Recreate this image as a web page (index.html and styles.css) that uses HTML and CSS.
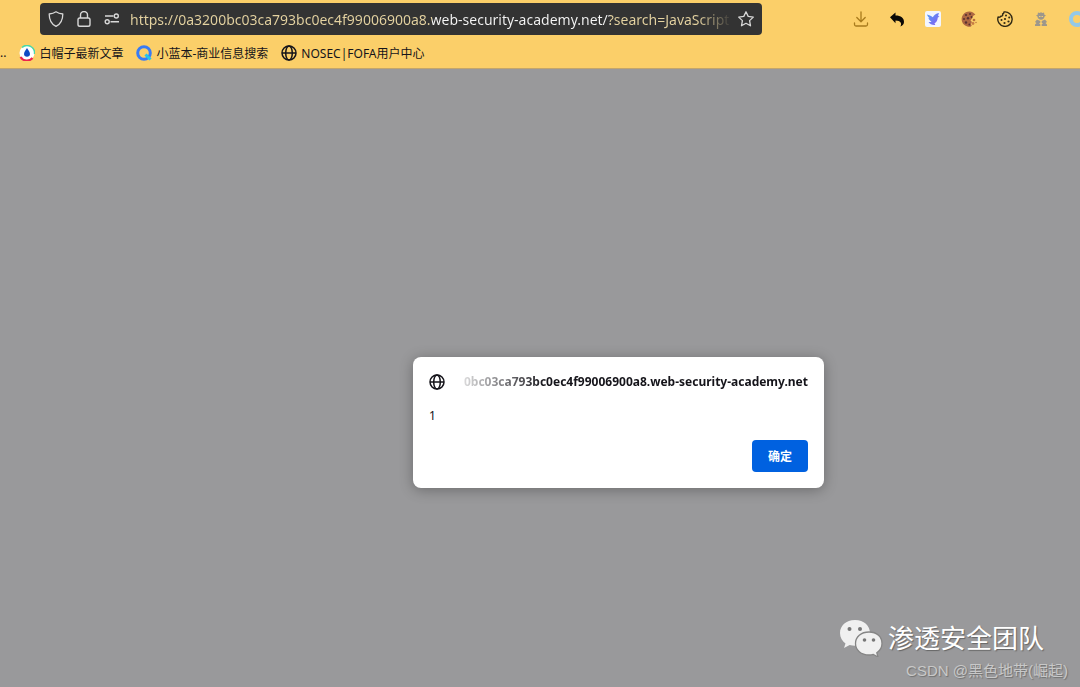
FILE: index.html
```html
<!DOCTYPE html>
<html lang="zh-CN">
<head>
    <meta charset="UTF-8">
    <meta name="viewport" content="width=device-width, initial-scale=1.0">
    <title>web-security-academy.net</title>
    <link rel="stylesheet" href="styles.css">
</head>
<body>
    <header class="browser">
        <div class="toolbar">
            <div class="address-bar">
                <button class="bar-button" aria-label="Protection">
                    <svg width="16" height="16" viewBox="0 0 16 16" fill="none" stroke="currentColor" stroke-width="1.3" stroke-linejoin="round"><path d="M8 .8c2 1.4 4.3 2 6.8 2.2C14.800 8.500 13 13 8 15.400 3 13 1.200 8.500 1.200 3 3.700 2.800 6 2.200 8 .8z"/></svg>
                </button>
                <button class="bar-button" aria-label="Connection">
                    <svg width="16" height="16" viewBox="0 0 16 16" fill="none" stroke="currentColor" stroke-width="1.4"><rect x="2" y="7" width="12" height="8.300" rx="1.800"/><path d="M4.500 7V4a3.500 3.500 0 0 1 7 0v3"/></svg>
                </button>
                <button class="bar-button" aria-label="Permissions">
                    <svg width="16" height="16" viewBox="0 0 16 16" fill="none" stroke="currentColor" stroke-width="1.4"><path d="M1 5h8.500M6.500 10.800H15"/><circle cx="12.300" cy="5" r="2"/><circle cx="3.200" cy="10.800" r="2"/></svg>
                </button>
                <input class="url" type="text" aria-label="Address" spellcheck="false" value="https://0a3200bc03ca793bc0ec4f99006900a8.web-security-academy.net/?search=JavaScript">
                <button class="bar-button" aria-label="Bookmark this page">
                    <svg width="16" height="16" viewBox="0 0 16 16" fill="none" stroke="currentColor" stroke-width="1.3" stroke-linejoin="round"><path d="M8 .8l2.200 4.600 5.100.7-3.700 3.500.9 5.200L8 12.300l-4.500 2.500.9-5.200L.7 6.100l5.100-.7z"/></svg>
                </button>
            </div>
            <nav class="extensions">
                <button class="ext-button" aria-label="Downloads">
                    <svg width="16" height="16" viewBox="0 0 16 16" fill="none" stroke="#a87b1c" stroke-width="1.300" stroke-linecap="round" stroke-linejoin="round"><path d="M8 1v9.500M3.800 6.500 8 10.700l4.200-4.200M1.500 12v1.500q0 1.500 1.500 1.500h10q1.500 0 1.500-1.500V12"/></svg>
                </button>
                <button class="ext-button" aria-label="Undo">
                    <svg width="16" height="16" viewBox="0 0 16 16"><path d="M1 6.200 6.500 1.500v3c5.500 0 8.500 2.500 8.500 6.500 0 2.200-1.400 3.800-3.700 4.400 1.900-2.500.6-6-4.800-6v2.800z" fill="#0b0906"/></svg>
                </button>
                <button class="ext-button" aria-label="Translate">
                    <svg width="16" height="16" viewBox="0 0 16 16">
                        <defs><linearGradient id="bird" x2="1" y2="1"><stop stop-color="#4e9df5"/><stop offset="1" stop-color="#8a5cf0"/></linearGradient></defs>
                        <rect width="16" height="16" rx="2" fill="#f3f6ff"/>
                        <path d="M2 3.500c2 .6 4 1 5.800 2.800C9 4 11 2.300 14 2c-.5 1.300-.7 2-.8 3l1.300.8-1.700.8c-.2 3-1.500 5-3.300 5.700l.8 1.700c-3 .3-5.300-.7-6.800-3 1.300.2 2.300 0 3-.6C4.600 9.400 3.700 8.300 3.500 7l1.300.2C3.300 6.200 2.400 5 2 3.500z" fill="url(#bird)"/>
                    </svg>
                </button>
                <button class="ext-button" aria-label="Cookie editor">
                    <svg width="16" height="16" viewBox="0 0 16 16">
                        <path d="M12 1.500A7.600 7.600 0 1 0 10 15.500l.7-1.300-1-1.200 1.300-2-1.500-1.500 1.800-2.300L12 5l2.400-1.500z" fill="#ad6741"/>
                        <g fill="#583030"><circle cx="5" cy="4" r="1.100"/><circle cx="9" cy="3" r="1"/><circle cx="3" cy="8" r="1"/><circle cx="7" cy="7.300" r="1.200"/><circle cx="10.500" cy="6" r=".9"/><circle cx="5" cy="11.500" r="1.200"/><circle cx="8.300" cy="13.500" r=".9"/></g>
                        <circle cx="13" cy="9" r="1.300" fill="#b86e3d"/><circle cx="12" cy="12.500" r="1.400" fill="#c77d43"/><circle cx="15" cy="11.500" r=".7" fill="#b86e3d"/>
                    </svg>
                </button>
                <button class="ext-button" aria-label="Cookies">
                    <svg width="16" height="16" viewBox="0 0 16 16"><path d="M7 1a7.200 7.200 0 1 1-5.900 5c1 .5 2.300.2 2.600-.8C5.400 5.300 6 4.200 5.600 3 6.600 2.700 7 2 7 1z" fill="none" stroke="#302914" stroke-width="1.400" stroke-linejoin="round"/><g fill="#302914"><circle cx="9" cy="4.500" r="1"/><circle cx="12.200" cy="6.500" r="1"/><circle cx="8" cy="8" r="1.100"/><circle cx="4.500" cy="9" r="1"/><circle cx="11.500" cy="10.500" r="1.100"/><circle cx="7.500" cy="12" r="1.100"/></g></svg>
                </button>
                <button class="ext-button" aria-label="Agent">
                    <svg width="16" height="16" viewBox="0 0 16 16" fill="#9d978b"><path d="M5 1.500 6.500 2 8 1.300 9.500 2l1.500-.5.4 2.300 1.600.7-1.500 1c0 1.800-1.500 3.300-3.500 3.300S4.500 7.300 4.500 5.500L3 4.500l1.600-.7z"/><path d="M4 8.500 7.300 10v1.700l-1.300.5 1.300 1V15H2v-1.500L3.500 12 2 11zM12 8.500 8.700 10v1.700l1.300.5-1.300 1V15H14v-1.500L12.500 12 14 11z"/><path d="M6 5.500h1.500M8.500 5.500H10" stroke="#f4cf76"/></svg>
                </button>
                <button class="ext-button" aria-label="Ring">
                    <svg width="16" height="16" viewBox="0 0 16 16"><circle cx="8" cy="8" r="6" fill="none" stroke="#94c9e8" stroke-width="4"/></svg>
                </button>
            </nav>
        </div>
        <nav class="bookmarks">
            <a href="#">..</a>
            <a href="#">
                <svg width="16" height="16" viewBox="0 0 16 16"><circle cx="8" cy="8" r="7.500" fill="#fff"/><path d="M3 2.500A7.500 7.500 0 0 1 15.500 9" fill="none" stroke="#48d8a8" stroke-width="1.500"/><path d="M1.500 12a7.500 7.500 0 0 0 12 1" fill="none" stroke="#ed244c" stroke-width="2.200"/><path d="M8 3c.8 1.800 3 3.700 3 6 0 1.700-1.300 2.700-3 2.700S5 10.700 5 9c0-2.300 2.200-4.200 3-6z" fill="#104cc6"/></svg>
                白帽子最新文章
            </a>
            <a href="#">
                <svg width="16" height="16" viewBox="0 0 16 16"><circle cx="8" cy="8" r="6.300" fill="none" stroke="#387bf5" stroke-width="3"/><path d="m9.500 9.500 5 5" stroke="#20c5ee" stroke-width="3"/></svg>
                小蓝本-商业信息搜索
            </a>
            <a href="#">
                <svg width="16" height="16" viewBox="0 0 16 16" fill="none" stroke="currentColor" stroke-width="1.500"><circle cx="8" cy="8" r="7"/><ellipse cx="8" cy="8" rx="3.300" ry="7"/><path d="M1 8h14"/></svg>
                NOSEC|FOFA用户中心
            </a>
        </nav>
    </header>
    <main>
        <div class="dialog" role="alertdialog" aria-labelledby="origin" aria-describedby="message">
            <div class="dialog-title">
                <svg width="16" height="16" viewBox="0 0 16 16" fill="none" stroke="currentColor" stroke-width="1.500"><circle cx="8" cy="8" r="7"/><ellipse cx="8" cy="8" rx="3.300" ry="7"/><path d="M1 8h14"/></svg>
                <h1 id="origin">0bc03ca793bc0ec4f99006900a8.web-security-academy.net</h1>
            </div>
            <p id="message">1</p>
            <button class="confirm">确定</button>
        </div>
    </main>
    <footer class="watermark">
        <div class="team">
            <svg width="44" height="38" viewBox="0 0 44 38">
                <path d="M16 1C7 1 1 6.700 1 14c0 4.500 2.200 8 5.500 10.500L5 29l5.700-3c1.700.5 3.500.8 5.300.8 9 0 15-5.700 15-12.800S25 1 16 1z" fill="#f0f0f0"/>
                <circle cx="10.500" cy="10" r="2" fill="#777"/><circle cx="21" cy="10" r="2" fill="#777"/>
                <path d="M30 13c-8 0-13.500 5-13.500 11.500S22 36 30 36c1.500 0 3-.2 4.300-.6L39 38l-1.200-4.200c3.300-2.200 5.200-5.300 5.200-9.300C43 18 38 13 30 13z" fill="#f0f0f0" stroke="#858585" stroke-width="1.300"/>
                <circle cx="25.500" cy="21" r="1.800" fill="#777"/><circle cx="34.500" cy="21" r="1.800" fill="#777"/>
            </svg>
            <span>渗透安全团队</span>
        </div>
        <div class="credit">CSDN @黑色地带(崛起)</div>
    </footer>
</body>
</html>
```
FILE: styles.css
```css
body {
    margin: 0;
    min-height: 100vh;
    background-color: #99999b;
    font-family: "Noto Sans", "Noto Sans CJK SC", sans-serif;
    font-size: 12px;
    color: #15141a;
    overflow: hidden;
}
button {
    border: none;
    padding: 0;
    background: none;
    color: inherit;
    font-family: inherit;
    cursor: pointer;
}
svg {
    display: block;
    flex-shrink: 0;
}
.browser {
    background-color: #fbcf69;
    border-bottom: 1px solid #c3a66c;
}
.toolbar {
    display: flex;
    align-items: center;
    justify-content: space-between;
    padding: 3px 0 0 40px;
}
.address-bar {
    display: flex;
    align-items: center;
    flex: 0 1 718px;
    min-width: 0;
    height: 32px;
    padding: 0 2px;
    background-color: #333;
    border-radius: 4px;
    color: #d8d8d8;
}
.bar-button {
    display: flex;
    justify-content: center;
    flex: 0 0 28px;
}
/* The host is brighter than the rest, and the end fades out */
.url {
    flex: 1;
    min-width: 0;
    margin-left: 4px;
    padding: 2px 0 0;
    border: none;
    outline: none;
    font-family: inherit;
    font-size: 14px;
    line-height: 28px;
    color: transparent;
    background: linear-gradient(to right, #e5d3a1 302px, #f5f5f5 302px, #f5f5f5 480px, #e5d3a1 480px, #e5d3a1 568px, #333 602px);
    -webkit-background-clip: text;
    background-clip: text;
}
.extensions {
    display: flex;
    flex-shrink: 0;
    margin-right: -15px;
}
.ext-button {
    display: flex;
    justify-content: center;
    width: 36px;
}
.bookmarks {
    display: flex;
    align-items: center;
    gap: 13px;
    height: 31px;
    padding-top: 2px;
}
.bookmarks a {
    display: flex;
    align-items: center;
    gap: 4px;
    color: #15141a;
    text-decoration: none;
    white-space: nowrap;
}
main {
    display: flex;
    justify-content: flex-end;
    padding: 288px 256px 0 0;
}
.dialog {
    display: flex;
    flex-direction: column;
    box-sizing: border-box;
    width: 411px;
    padding: 16px;
    background-color: #fff;
    border-radius: 8px;
    box-shadow: 0 2px 14px rgba(0, 0, 0, 0.3);
}
.dialog-title {
    display: flex;
    align-items: center;
    gap: 4px;
}
.dialog h1 {
    display: flex;
    justify-content: flex-end;
    flex: 1;
    min-width: 0;
    margin: 0;
    overflow: hidden;
    font-size: 12px;
    line-height: 17px;
    -webkit-mask-image: linear-gradient(to right, transparent, #000 96px);
    mask-image: linear-gradient(to right, transparent, #000 96px);
}
.dialog p {
    margin: 17px 0 15px;
    line-height: 18px;
}
.confirm {
    align-self: flex-end;
    width: 56px;
    height: 32px;
    border-radius: 4px;
    background-color: #0061e0;
    color: #fff;
    font-size: 12px;
    font-weight: bold;
}
.watermark {
    position: absolute;
    right: 12px;
    bottom: 5px;
    text-align: right;
}
.team {
    display: flex;
    align-items: center;
    justify-content: flex-end;
    gap: 5px;
    margin-right: 24px;
    color: #fff;
    font-size: 26px;
    line-height: 38px;
    text-shadow: 1px 1px 1px #666;
}
.credit {
    margin-top: 3px;
    color: #c8c8c8;
    font-family: "Liberation Sans", "Noto Sans CJK SC", sans-serif;
    font-size: 15px;
    line-height: 22px;
    text-shadow: 1px 1px 1px #707070;
}
```
